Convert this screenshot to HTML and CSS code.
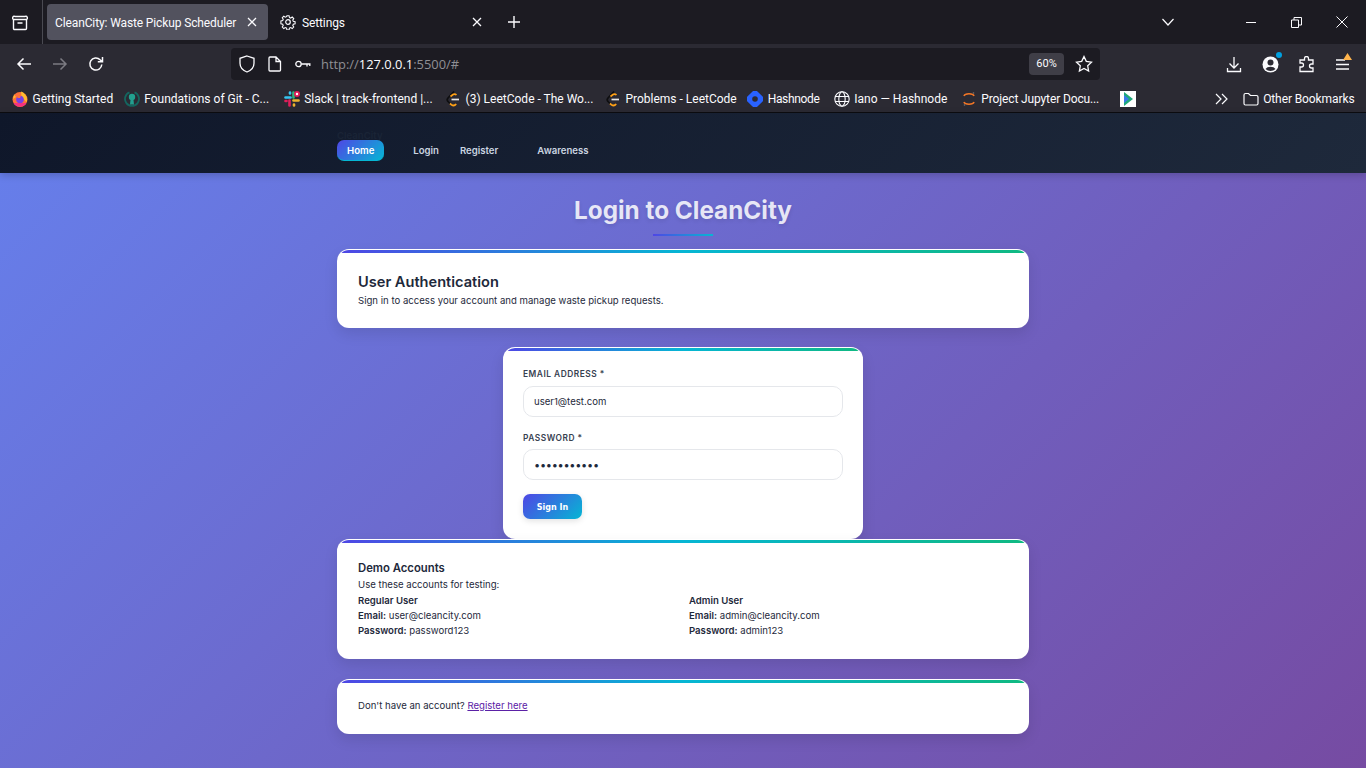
FILE: index.html
```html
<!DOCTYPE html>
<html lang="en">
<head>
    <meta charset="UTF-8">
    <meta name="viewport" content="width=device-width, initial-scale=1.0">
    <title>CleanCity: Waste Pickup Scheduler</title>
    <link rel="stylesheet" href="styles.css">
</head>
<body>
    <div class="browser">
        <div class="tabbar">
            <div class="tab-view">
                <svg width="16" height="16" viewBox="0 0 16 16" fill="none" stroke="#fbfbfe" stroke-width="1.4"><path d="M3 1.5h10M1.500 4.500h13v9a1 1 0 0 1-1 1h-11a1 1 0 0 1-1-1zM1.500 4.500a1.500 1.500 0 0 1 1.500-3M14.500 4.500a1.500 1.500 0 0 0-1.500-3M5.500 8h5"/></svg>
            </div>
            <div class="tab tab-active">
                <span class="tab-title">CleanCity: Waste Pickup Scheduler</span>
                <svg class="tab-close" width="10" height="10" viewBox="0 0 10 10" stroke="#fbfbfe" stroke-width="1.300"><path d="M1 1l8 8M9 1l-8 8"/></svg>
            </div>
            <div class="tab tab-settings">
                <svg width="16" height="16" viewBox="0 0 16 16" fill="none" stroke="#fbfbfe" stroke-width="1.200"><circle cx="8" cy="8" r="2.300"/><path d="M6.800 1h2.400l.4 2 1.400.6 1.700-1.100 1.700 1.700-1.100 1.700.6 1.400 2 .4v2.400l-2 .4-.6 1.400 1.100 1.700-1.700 1.700-1.700-1.100-1.400.6-.4 2H6.800l-.4-2-1.400-.6-1.700 1.100-1.700-1.700 1.100-1.700-.6-1.400-2-.4V6.800l2-.4.6-1.400-1.100-1.700 1.700-1.700 1.700 1.100 1.400-.6z" transform="translate(.8 .8) scale(.9)"/></svg>
                <span class="tab-title">Settings</span>
                <svg class="tab-close" width="10" height="10" viewBox="0 0 10 10" stroke="#fbfbfe" stroke-width="1.300"><path d="M1 1l8 8M9 1l-8 8"/></svg>
            </div>
            <svg class="tab-new" width="14" height="14" viewBox="0 0 14 14" stroke="#fbfbfe" stroke-width="1.400"><path d="M7 1v12M1 7h12"/></svg>
            <svg class="tab-list" width="14" height="10" viewBox="0 0 14 10" fill="none" stroke="#fbfbfe" stroke-width="1.200"><path d="M1.500 2l5.500 6 5.500-6"/></svg>
            <div class="win-btns">
                <svg width="10" height="10" viewBox="0 0 10 10" stroke="#fbfbfe"><path d="M0 5.500h10"/></svg>
                <svg width="11" height="11" viewBox="0 0 11 11" fill="none" stroke="#fbfbfe"><path d="M.5 3h7v7.500h-7zM3 3V.5h7.500v7.500H7.500"/></svg>
                <svg width="12" height="12" viewBox="0 0 12 12" stroke="#fbfbfe"><path d="M.5.500l11 11M11.500.500l-11 11"/></svg>
            </div>
        </div>

        <div class="toolbar">
            <div class="nav-btns">
                <svg width="16" height="16" viewBox="0 0 16 16" fill="none" stroke="#fbfbfe" stroke-width="1.500"><path d="M15 8H2M7.500 2.500L2 8l5.500 5.500"/></svg>
                <svg width="16" height="16" viewBox="0 0 16 16" fill="none" stroke="#7c7b83" stroke-width="1.500"><path d="M1 8h13M8.500 2.500L14 8l-5.500 5.500"/></svg>
                <svg width="16" height="16" viewBox="0 0 16 16" fill="none" stroke="#fbfbfe" stroke-width="1.500"><path d="M13.800 8.500a6 6 0 1 1-1.700-4.700L14 5.500M14.500 1v4.800H9.800"/></svg>
            </div>
            <div class="urlbar">
                <svg width="16" height="18" viewBox="0 0 16 18" fill="none" stroke="#fbfbfe" stroke-width="1.300"><path d="M8 1l7 2.300v5c0 4.200-3 7.200-7 8.700-4-1.500-7-4.500-7-8.700v-5z"/></svg>
                <svg class="url-page" width="14" height="16" viewBox="0 0 14 16" fill="none" stroke="#fbfbfe" stroke-width="1.300"><path d="M2 1h6l4.500 4.500V14a1 1 0 0 1-1 1H2a1 1 0 0 1-1-1V2a1 1 0 0 1 1-1zM8 1v4.500h4.500"/></svg>
                <svg class="url-key" width="16" height="10" viewBox="0 0 16 10" fill="none" stroke="#fbfbfe" stroke-width="1.300"><circle cx="3.500" cy="5" r="2.700"/><path d="M6.200 5H15.500M12 5v2.500M14.800 5v2"/></svg>
                <span class="url-text">http://<b>127.0.0.1</b>:5500/#</span>
                <span class="zoom-badge">60%</span>
                <svg class="url-star" width="18" height="18" viewBox="0 0 18 18" fill="none" stroke="#fbfbfe" stroke-width="1.300"><path d="M9 1.500l2.300 4.900 5.200.7-3.800 3.700.9 5.300L9 13.500l-4.600 2.600.9-5.300L1.500 7.100l5.200-.7z"/></svg>
            </div>
            <div class="tool-icons">
                <svg width="16" height="17" viewBox="0 0 16 17" fill="none" stroke="#fbfbfe" stroke-width="1.300"><path d="M8 1v10.500M3.500 7.500L8 12l4.500-4.500M1.500 12v3.500h13V12"/></svg>
                <span class="tool-account">
                    <svg width="17" height="17" viewBox="0 0 17 17"><circle cx="8.500" cy="8.500" r="8" fill="#fbfbfe"/><circle cx="8.500" cy="6.500" r="3" fill="#2b2a33"/><path d="M3.500 13a5.500 4 0 0 1 10 0 7 7 0 0 1-10 0z" fill="#2b2a33"/></svg>
                    <span class="account-dot"></span>
                </span>
                <svg width="16" height="17" viewBox="0 0 16 17" fill="none" stroke="#fbfbfe" stroke-width="1.300"><path d="M6 2.500a2 2 0 0 1 4 0V4h4.500v4H13a2 2 0 0 0 0 4h1.500v3.500h-13V11H3a2 2 0 0 0 0-4H1.500V4H6z" transform="translate(-.5 0)"/></svg>
                <span class="tool-menu">
                    <svg width="14" height="14" viewBox="0 0 14 14" stroke="#fbfbfe" stroke-width="1.300"><path d="M1 3h9M1 7.500h13M1 12h13"/></svg>
                    <svg class="menu-alert" width="9" height="7" viewBox="0 0 9 7"><path d="M4.500 0l4.500 7H0z" fill="#ffb44c"/></svg>
                </span>
            </div>
        </div>

        <div class="bookmarks">
            <a class="bm bm-first">
                <svg width="16" height="16" viewBox="0 0 16 16"><circle cx="8" cy="8.500" r="7.500" fill="#ff7139"/><path d="M1.500 12a7.500 7.500 0 0 0 13 0z" fill="#f5317f"/><path d="M9 .5c3 1 6 4 6 8 0 1-.2 2-.5 2.500L9.500 5.500z" fill="#ffbd2e"/><path d="M2 3.500L1 8l3-2z" fill="#ffbd2e"/><circle cx="8" cy="8.500" r="3.800" fill="#7542e5"/><path d="M5 4.500h4L8 7H5.500z" fill="#ff7139"/></svg>
                Getting Started
            </a>
            <a class="bm bm-git">
                <svg width="16" height="16" viewBox="0 0 16 16" fill="none"><path d="M5.500 1.400A7 7 0 1 0 10.500 1.400" stroke="#14665f" stroke-width="1.800"/><circle cx="8" cy="6" r="3.200" fill="#22a08f"/><path d="M6.600 8h2.800l.6 5.500H6z" fill="#22a08f"/></svg>
                Foundations of Git - C...
            </a>
            <a class="bm bm-slack">
                <svg width="16" height="16" viewBox="0 0 16 16" fill="none" stroke-width="2.600" stroke-linecap="round"><path d="M1.500 6.500h5" stroke="#36c5f0"/><path d="M6 1.500v1" stroke="#36c5f0"/><path d="M5.500 9.500v5" stroke="#e01e5a"/><path d="M1.500 10h1" stroke="#e01e5a"/><path d="M9.500 9.500h5" stroke="#ecb22e"/><path d="M10 14.500v-1" stroke="#ecb22e"/><path d="M9.500 1.500v5" stroke="#2eb67d"/><circle cx="13" cy="3" r="3" fill="#e01e5a" stroke="none"/><circle cx="13" cy="3" r="1.200" fill="#fff" stroke="none"/></svg>
                Slack | track-frontend |...
            </a>
            <a class="bm bm-leet">
                <svg width="16" height="16" viewBox="0 0 16 16" fill="none" stroke-width="1.700"><path d="M9 .5L3 7c-1 1.200-1 2.500 0 3.500l2 2" stroke="#0e0e10"/><path d="M5.500 5.500L8 3.500c1.200-.8 2.400-.6 3.500.5" stroke="#ffa116"/><path d="M5 12.500l1.500 1.300c1.500 1 3.300.9 4.700-.8" stroke="#ffa116"/><path d="M6.500 8.500H14" stroke="#e6e6e6"/></svg>
                (3) LeetCode - The Wo...
            </a>
            <a class="bm bm-leet2">
                <svg width="16" height="16" viewBox="0 0 16 16" fill="none" stroke-width="1.700"><path d="M9 .5L3 7c-1 1.200-1 2.500 0 3.500l2 2" stroke="#0e0e10"/><path d="M5.500 5.500L8 3.500c1.200-.8 2.400-.6 3.500.5" stroke="#ffa116"/><path d="M5 12.500l1.500 1.300c1.500 1 3.300.9 4.700-.8" stroke="#ffa116"/><path d="M6.500 8.500H14" stroke="#e6e6e6"/></svg>
                Problems - LeetCode
            </a>
            <a class="bm bm-hash">
                <svg width="16" height="16" viewBox="0 0 16 16"><path d="M5 .900a4 4 0 0 1 6 0l4.100 4.100a4 4 0 0 1 0 6L11 15.100a4 4 0 0 1-6 0L.9 11a4 4 0 0 1 0-6z" fill="#2962ff"/><circle cx="8" cy="8" r="2.800" fill="#2b2a33"/></svg>
                Hashnode
            </a>
            <a class="bm bm-globe">
                <svg width="16" height="16" viewBox="0 0 16 16" fill="none" stroke="#fbfbfe" stroke-width="1.100"><circle cx="8" cy="8" r="7.200"/><ellipse cx="8" cy="8" rx="3.200" ry="7.200"/><path d="M1 5.500h14M1 10.500h14"/></svg>
                Iano — Hashnode
            </a>
            <a class="bm bm-jupyter">
                <svg width="16" height="16" viewBox="0 0 16 16" fill="none" stroke="#f37626" stroke-width="1.600"><path d="M3 5c1-3 9-3 10 0M3 11c1 3 9 3 10 0"/><circle cx="3.500" cy="14" r=".8" fill="#767677" stroke="none"/><circle cx="12.500" cy="2" r=".8" fill="#767677" stroke="none"/></svg>
                Project Jupyter Docu...
            </a>
            <a class="bm bm-play">
                <svg width="16" height="16" viewBox="0 0 16 16"><path d="M0 0h16v16H0z" fill="#fff"/><path d="M4 1l9 7-9 7z" fill="#1fa97a"/><path d="M4 4l5 4-5 4z" fill="#3a7be8"/></svg>
            </a>
            <svg class="bm-more" width="13" height="12" viewBox="0 0 13 12" fill="none" stroke="#fbfbfe" stroke-width="1.200"><path d="M1 1l5 5-5 5M7 1l5 5-5 5"/></svg>
            <a class="bm bm-other">
                <svg width="16" height="14" viewBox="0 0 16 14" fill="none" stroke="#fbfbfe" stroke-width="1.200"><path d="M1 3a1.500 1.500 0 0 1 1.500-1.500h3L7.500 3.500h6A1.500 1.500 0 0 1 15 5v6.500a1.500 1.500 0 0 1-1.500 1.500h-11A1.500 1.500 0 0 1 1 11.500z"/></svg>
                Other Bookmarks
            </a>
        </div>
    </div>

    <header class="site-header">
        <div class="header-inner">
            <div class="brand">CleanCity</div>
            <nav class="site-nav">
                <a class="nav-link nav-active">Home</a>
                <a class="nav-link nav-login">Login</a>
                <a class="nav-link nav-register">Register</a>
                <a class="nav-link nav-aware">Awareness</a>
            </nav>
        </div>
    </header>

    <main class="page">
        <h1 class="page-title">Login to CleanCity</h1>
        <div class="cards">
            <section class="card card-auth">
                <h2>User Authentication</h2>
                <p>Sign in to access your account and manage waste pickup requests.</p>
            </section>

            <section class="card card-form">
                <label for="email">Email Address *</label>
                <input id="email" class="field" type="email" value="user1@test.com">
                <label class="label-pass" for="password">Password *</label>
                <input id="password" class="field field-pass" type="password" value="password123">
                <button class="btn-signin" type="button">Sign In</button>
            </section>

            <section class="card card-demo">
                <h3>Demo Accounts</h3>
                <p>Use these accounts for testing:</p>
                <div class="demo-grid">
                    <div>
                        <h4>Regular User</h4>
                        <p><strong>Email:</strong> user@cleancity.com</p>
                        <p><strong>Password:</strong> password123</p>
                    </div>
                    <div>
                        <h4>Admin User</h4>
                        <p><strong>Email:</strong> admin@cleancity.com</p>
                        <p><strong>Password:</strong> admin123</p>
                    </div>
                </div>
            </section>

            <section class="card card-register">
                <p>Don't have an account? <a href="#">Register here</a></p>
            </section>
        </div>
    </main>
</body>
</html>
```

FILE: styles.css
```css
* {
    box-sizing: border-box;
}
html, body {
    height: 100%;
}
body {
    margin: 0;
    display: flex;
    flex-direction: column;
    height: 100vh;
    overflow: hidden;
    font-family: Inter, "Noto Sans", sans-serif;
    font-size: 9.6px;
    color: #1e293b;
}
svg {
    flex: none;
    display: block;
}

/* browser chrome */
.browser {
    flex: none;
    font-family: Roboto, "Noto Sans", sans-serif;
    color: #fbfbfe;
    font-size: 12px;
}
.tabbar {
    height: 44px;
    background: #1c1b22;
    display: flex;
    align-items: center;
}
.tab-view {
    width: 43px;
    height: 44px;
    padding: 15px 0 0 12px;
    border-right: 1px solid #4a4a52;
}
.tab {
    height: 36px;
    display: flex;
    align-items: center;
    border-radius: 4px;
    white-space: nowrap;
}
.tab-title {
    letter-spacing: -0.12px;
    padding-top: 2px;
}
.tab-active {
    width: 221px;
    margin-left: 4px;
    padding: 0 11px 0 8px;
    background: #52525e;
    justify-content: space-between;
}
.tab-settings {
    width: 221px;
    margin-left: 4px;
    padding: 0 11px 0 8px;
    gap: 6px;
}
.tab-settings .tab-close {
    margin-left: auto;
}
.tab-new {
    margin-left: 14px;
}
.tab-list {
    margin-left: 640px;
}
.win-btns {
    margin-left: auto;
    width: 120px;
    padding-right: 18px;
    display: flex;
    align-items: center;
    justify-content: space-between;
}
.toolbar {
    height: 40px;
    background: #2b2a33;
    display: flex;
    align-items: center;
}
.nav-btns {
    width: 231px;
    padding-left: 16px;
    display: flex;
    gap: 20px;
}
.urlbar {
    width: 869px;
    height: 32px;
    background: #1c1b22;
    border-radius: 4px;
    display: flex;
    align-items: center;
    padding: 0 8px;
}
.url-page {
    margin-left: 13px;
}
.url-key {
    margin-left: 13px;
}
.url-text {
    margin-left: 10px;
    font-family: "Open Sans", sans-serif;
    font-size: 12.9px;
    color: #8f8f94;
}
.url-text b {
    font-weight: 400;
    color: #fbfbfe;
}
.zoom-badge {
    margin-left: auto;
    width: 35px;
    height: 22px;
    background: #3f3e47;
    border-radius: 4px;
    font-size: 11px;
    line-height: 22px;
    text-align: center;
}
.url-star {
    margin-left: 11px;
    margin-right: -1px;
}
.tool-icons {
    display: flex;
    align-items: center;
    gap: 20px;
    margin-left: 126px;
}
.tool-account, .tool-menu {
    position: relative;
    display: block;
}
.account-dot {
    position: absolute;
    top: -4px;
    right: -3px;
    width: 6px;
    height: 6px;
    border-radius: 50%;
    background: #00a0e0;
}
.menu-alert {
    position: absolute;
    top: -4px;
    right: -3px;
}
.bookmarks {
    height: 29px;
    padding: 1px 0 0 12px;
    background: #2b2a33;
    border-bottom: 1px solid #0c0c10;
    display: flex;
    align-items: center;
    white-space: nowrap;
}
.bm {
    display: flex;
    align-items: center;
    gap: 4.5px;
}
.bm-first {
    margin-right: 10.5px;
}
.bm-git {
    margin-right: 14.5px;
}
.bm-slack {
    margin-right: 12.5px;
}
.bm-leet {
    margin-right: 11.5px;
}
.bm-leet2 {
    margin-right: 10.5px;
}
.bm-hash {
    margin-right: 14.3px;
    letter-spacing: -0.35px;
}
.bm-globe {
    margin-right: 13.5px;
}
.bm-jupyter {
    margin-right: 20.5px;
    letter-spacing: -0.13px;
}
.bm-more {
    margin-left: 79px;
}
.bm-other {
    margin-left: 15px;
    letter-spacing: -0.1px;
}

/* site */
.site-header {
    flex: none;
    height: 60px;
    background: linear-gradient(135deg, #0f172a, #1e293b);
    box-shadow: 0 2px 8px rgba(0, 0, 0, 0.2);
    position: relative;
}
.header-inner {
    width: 692px;
    margin: 0 auto;
    padding-top: 17px;
}
.brand {
    font-size: 9.6px;
    font-weight: 600;
    line-height: 12px;
    margin-bottom: -2px;
    color: #1a2436;
}
.site-nav {
    display: flex;
    position: relative;
}
.nav-link {
    padding: 0 10px;
    height: 21px;
    line-height: 21px;
    font-size: 9.600px;
    font-weight: 600;
    color: #cbd5e1;
    border-radius: 7px;
}
.nav-active {
    color: #fff;
    background: linear-gradient(135deg, #4f46e5, #06b6d4);
    border-bottom: 1px solid #06b6d4;
}
.nav-login {
    margin-left: 19px;
}
.nav-register {
    margin-left: 1px;
}
.nav-aware {
    margin-left: 19px;
}
.page {
    flex: 1;
    background: linear-gradient(135deg, #667eea 0%, #764ba2 100%);
}
.page-title {
    margin: 0;
    padding-top: 23px;
    font-size: 24.3px;
    line-height: 29px;
    font-weight: 700;
    text-align: center;
    color: rgba(255, 255, 255, 0.85);
    text-shadow: 0 2px 4px rgba(0, 0, 0, 0.1);
}
.page-title::after {
    content: "";
    display: block;
    width: 60px;
    height: 2px;
    margin: 9px auto 0;
    background: linear-gradient(90deg, #4f46e5, #06b6d4);
}
.cards {
    width: 692px;
    margin: 13px auto 0;
    display: flex;
    flex-direction: column;
    align-items: center;
}
.card {
    width: 100%;
    position: relative;
    overflow: hidden;
    background: #fff;
    border: 1px solid rgba(255, 255, 255, 0.9);
    border-radius: 12px;
    box-shadow: 0 6px 14px rgba(0, 0, 0, 0.1);
    padding: 0 20px;
    line-height: 14px;
}
.card::before {
    content: "";
    position: absolute;
    top: 0;
    left: 0;
    right: 0;
    height: 3px;
    background: linear-gradient(90deg, #4f46e5, #06b6d4, #10b981);
}
.card p {
    margin: 0;
}
.card-auth {
    height: 79px;
    padding-top: 23px;
    margin-bottom: 19px;
}
.card-auth h2 {
    margin: 0;
    font-size: 14.6px;
    line-height: 18px;
    font-weight: 600;
}
.card-auth p {
    margin-top: 3px;
}
.card-form {
    width: 360px;
    height: 192px;
    padding: 20px 19px 0;
}
.card-form label {
    display: block;
    font-size: 8.400px;
    font-weight: 600;
    line-height: 12px;
    letter-spacing: 0.5px;
    text-transform: uppercase;
    color: #374151;
    margin-bottom: 6px;
}
.card-form .label-pass {
    padding-top: 1px;
    margin-bottom: 5px;
}
.field {
    display: block;
    width: 100%;
    height: 31px;
    padding: 0 10px;
    margin-bottom: 14px;
    border: 1px solid #e5e7eb;
    border-radius: 10px;
    background: #fff;
    font: 9.600px Inter, sans-serif;
    color: #1e293b;
}
.field-pass {
    font-size: 11px;
    letter-spacing: -0.3px;
}
.btn-signin {
    display: block;
    width: 59px;
    height: 25px;
    padding: 1px 0 0;
    border: none;
    border-radius: 7px;
    background: linear-gradient(135deg, #4f46e5, #06b6d4);
    box-shadow: 0 2px 6px rgba(0, 0, 0, 0.12);
    color: #fff;
    font-family: "DejaVu Sans", sans-serif;
    font-size: 8px;
    font-weight: 700;
}
.card-demo {
    height: 120px;
    padding-top: 21px;
    margin-bottom: 20px;
}
.card-demo h3 {
    margin: 0 0 2px;
    font-size: 11.300px;
    line-height: 14px;
    font-weight: 600;
}
.card-demo > p {
    line-height: 15px;
}
.demo-grid {
    display: grid;
    grid-template-columns: 1fr 1fr;
    column-gap: 12px;
    padding-top: 1px;
    line-height: 15px;
}
.demo-grid h4 {
    margin: 0;
    font-size: 9.600px;
    font-weight: 600;
}
.demo-grid p {
    line-height: 15px;
}
.demo-grid strong {
    font-weight: 600;
}
.card-register {
    height: 55px;
    padding-top: 19px;
}
.card-register a {
    color: #5b21a6;
}
```
